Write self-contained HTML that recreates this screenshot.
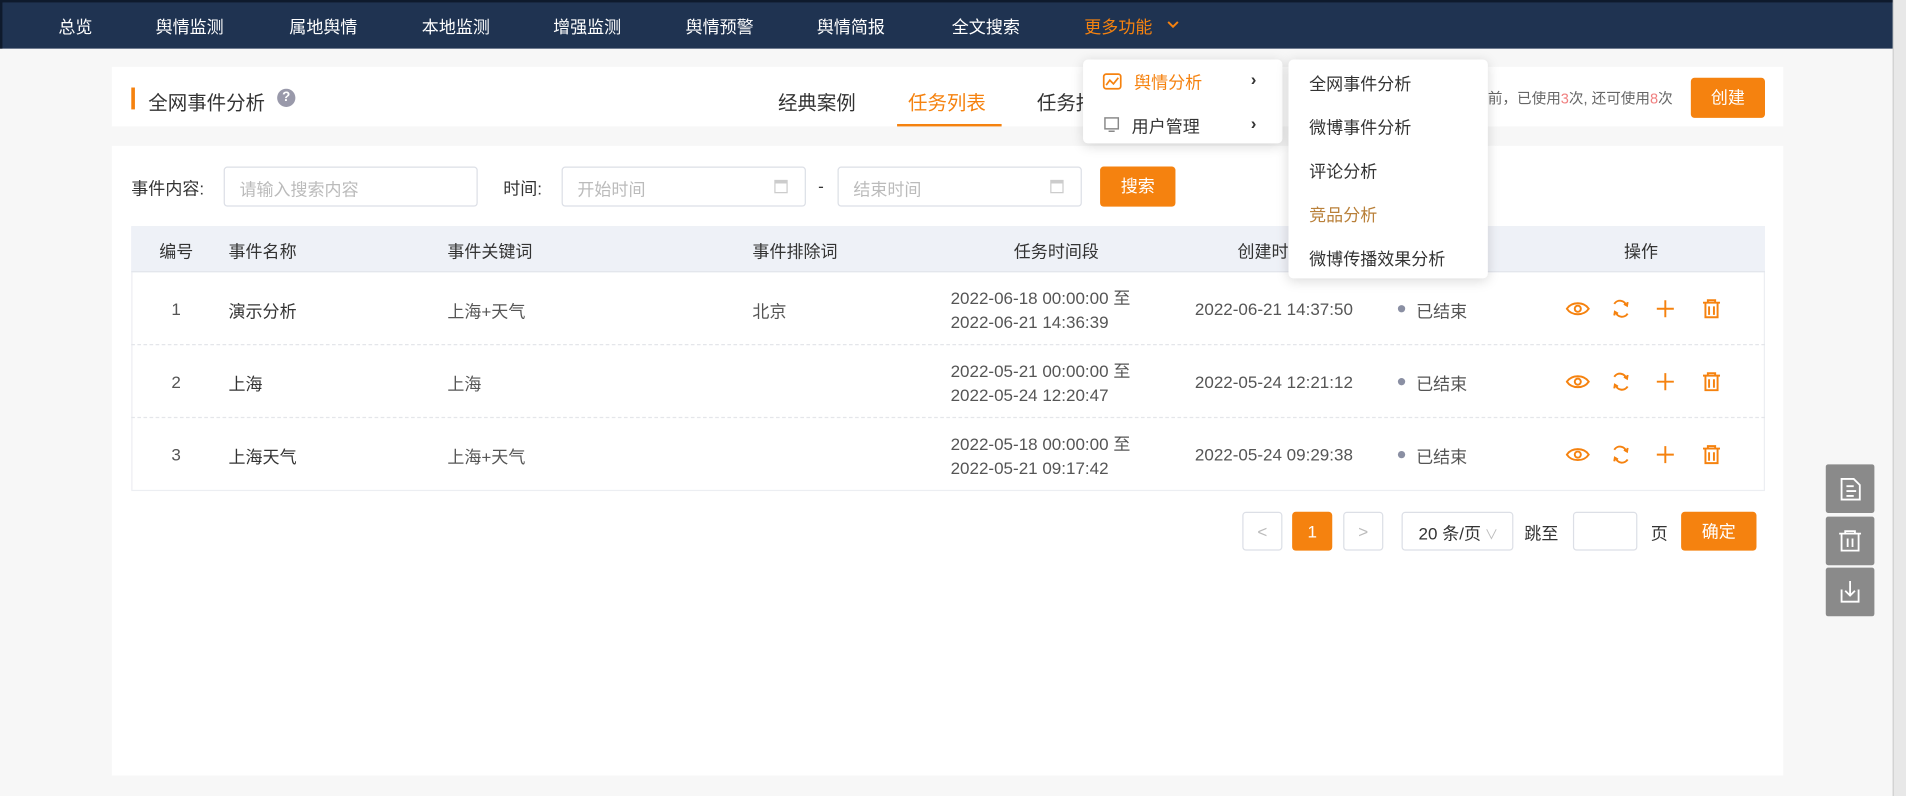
<!DOCTYPE html>
<html><head><meta charset="utf-8">
<style>
*{margin:0;padding:0;box-sizing:border-box}
html,body{width:1906px;height:796px;overflow:hidden;background:#f7f7f7}
#w{position:absolute;left:0;top:0;width:1568px;height:655px;transform:scale(1.21556);transform-origin:0 0;font-family:"Liberation Sans","Noto Sans CJK SC",sans-serif;font-size:14px;color:#333;background:#f7f7f7}
.a{position:absolute;white-space:nowrap}
.nav{position:absolute;left:0;top:0;width:1557px;height:40px;background:#1f3351;border-left:2px solid #0e1a2c;border-top:2px solid #0e1a2c}
.nav span{position:absolute;top:10px;color:#fff;font-size:14px}
.card{position:absolute;background:#fff}
.inp{position:absolute;height:33px;border:1px solid #dcdfe6;border-radius:3px;background:#fff;color:#bbb;padding:8px 12px;font-size:14px}
.btn{position:absolute;background:#f5820f;color:#fff;border-radius:3px;text-align:center;font-size:14px}
.th{position:absolute;top:197px;color:#333}
.row{position:absolute;left:108px;width:1344px;height:60px;border-bottom:1px dashed #e4e6ea}
.dd{position:absolute;background:#fff;border-radius:4px;box-shadow:0 2px 10px rgba(0,0,0,.15)}
.side{position:absolute;left:1502px;width:40px;height:40px;background:#8a8a8a;border-radius:2px}
</style></head><body><div id="w">
<div style="position:absolute;left:1557px;top:0;width:11px;height:655px;background:#e8e8e8;border-left:1px solid #cfcfcf"></div>
<div class="nav">
<span style="left:46px">总览</span><span style="left:126px">舆情监测</span><span style="left:236px">属地舆情</span><span style="left:345px">本地监测</span><span style="left:453px">增强监测</span><span style="left:562px">舆情预警</span><span style="left:670px">舆情简报</span><span style="left:781px">全文搜索</span><span style="left:890px;color:#f5820f">更多功能</span>
<svg style="position:absolute;left:957px;top:14px" width="12" height="10" viewBox="0 0 12 10"><path d="M2 2l4 4 4-4" stroke="#f5820f" stroke-width="1.6" fill="none"/></svg>
</div>
<div class="card" style="left:92px;top:55px;width:1375px;height:49px"></div>
<div class="a" style="left:108px;top:72px;width:3px;height:18px;background:#f5820f"></div>
<div class="a" style="left:122px;top:71px;font-size:16px">全网事件分析</div>
<div class="a" style="left:228px;top:73px;width:15px;height:15px;border-radius:50%;background:#99a;color:#fff;font-size:11px;text-align:center;line-height:15px;font-weight:bold">?</div>
<div class="a" style="left:640px;top:71px;font-size:16px">经典案例</div>
<div class="a" style="left:747px;top:71px;font-size:16px;color:#f5820f">任务列表</div>
<div class="a" style="left:738px;top:102px;width:86px;height:2px;background:#f5820f"></div>
<div class="a" style="left:853px;top:71px;font-size:16px">任务报告</div>
<div class="a" style="left:1188px;top:72px;font-size:12px;color:#666">截止目前，已使用<span style="color:#f08080">3</span>次, 还可使用<span style="color:#f08080">8</span>次</div>
<div class="btn" style="left:1391px;top:64px;width:61px;height:33px;line-height:33px">创建</div>
<div class="card" style="left:92px;top:120px;width:1375px;height:518px"></div>
<div class="a" style="left:108px;top:145px">事件内容:</div>
<div class="inp" style="left:184px;top:137px;width:209px">请输入搜索内容</div>
<div class="a" style="left:414px;top:145px">时间:</div>
<div class="inp" style="left:462px;top:137px;width:201px">开始时间<span style="position:absolute;right:14px;top:10px;width:11px;height:11px;border:1px solid #ccc;border-top-width:3px"></span></div>
<div class="a" style="left:673px;top:145px">-</div>
<div class="inp" style="left:689px;top:137px;width:201px">结束时间<span style="position:absolute;right:14px;top:10px;width:11px;height:11px;border:1px solid #ccc;border-top-width:3px"></span></div>
<div class="btn" style="left:905px;top:137px;width:62px;height:33px;line-height:33px">搜索</div>
<div class="a" style="left:108px;top:186px;width:1344px;height:218px;border:1px solid #eceef2"></div>
<div class="a" style="left:108px;top:186px;width:1344px;height:38px;background:#eef1f7;border-bottom:1px solid #e2e5ec"></div>
<div class="th" style="left:131px">编号</div><div class="th" style="left:188px">事件名称</div><div class="th" style="left:368px">事件关键词</div><div class="th" style="left:619px">事件排除词</div><div class="th" style="left:834px">任务时间段</div><div class="th" style="left:1018px">创建时间</div><div class="th" style="left:1336px">操作</div>
<div class="row" style="top:224px"></div><div class="row" style="top:284px"></div><div class="row" style="top:344px;border:none"></div>
<div class="a" style="left:141px;top:246px;color:#555">1</div><div class="a" style="left:188px;top:246px">演示分析</div><div class="a" style="left:368px;top:246px;color:#555">上海+天气</div><div class="a" style="left:619px;top:246px;color:#555">北京</div>
<div class="a" style="left:782px;top:235px;color:#555">2022-06-18 00:00:00 至</div><div class="a" style="left:782px;top:257px;color:#555">2022-06-21 14:36:39</div>
<div class="a" style="left:983px;top:246px;color:#555">2022-06-21 14:37:50</div>
<div class="a" style="left:141px;top:306px;color:#555">2</div><div class="a" style="left:188px;top:306px">上海</div><div class="a" style="left:368px;top:306px;color:#555">上海</div>
<div class="a" style="left:782px;top:295px;color:#555">2022-05-21 00:00:00 至</div><div class="a" style="left:782px;top:317px;color:#555">2022-05-24 12:20:47</div>
<div class="a" style="left:983px;top:306px;color:#555">2022-05-24 12:21:12</div>
<div class="a" style="left:141px;top:366px;color:#555">3</div><div class="a" style="left:188px;top:366px">上海天气</div><div class="a" style="left:368px;top:366px;color:#555">上海+天气</div>
<div class="a" style="left:782px;top:355px;color:#555">2022-05-18 00:00:00 至</div><div class="a" style="left:782px;top:377px;color:#555">2022-05-21 09:17:42</div>
<div class="a" style="left:983px;top:366px;color:#555">2022-05-24 09:29:38</div>
<div class="a" style="left:1150px;top:251px;width:6px;height:6px;border-radius:50%;background:#8a8fa3"></div><div class="a" style="left:1165px;top:246px;color:#555">已结束</div>
<div class="a" style="left:1150px;top:311px;width:6px;height:6px;border-radius:50%;background:#8a8fa3"></div><div class="a" style="left:1165px;top:306px;color:#555">已结束</div>
<div class="a" style="left:1150px;top:371px;width:6px;height:6px;border-radius:50%;background:#8a8fa3"></div><div class="a" style="left:1165px;top:366px;color:#555">已结束</div>
<svg class="a" style="left:1288px;top:244px" width="130" height="140" viewBox="0 0 130 140">
<defs><g id="ic" fill="none" stroke="#f5820f" stroke-width="1.6">
<path d="M1 10c4-6 14-6 18 0c-4 6-14 6-18 0z"/><circle cx="10" cy="10" r="2.5"/>
<path d="M40 6a5.5 5.5 0 0 1 10 1.5M51 14a5.5 5.5 0 0 1-10-1.5"/><path d="M48 6l2.5 1.5 .5-3M43 14l-2.5-1.5-.5 3"/>
<path d="M82 3v14M75 10h14"/>
<path d="M113 5h14M117 5v-2h6v2M115 5v12h10v-12M118 8v7M122 8v7"/>
</g></defs>
<use href="#ic" y="0"/><use href="#ic" y="60"/><use href="#ic" y="120"/>
</svg>
<div class="a" style="left:1022px;top:421px;width:33px;height:32px;border:1px solid #dcdfe6;border-radius:3px;color:#bbb;text-align:center;line-height:30px">&lt;</div>
<div class="btn" style="left:1063px;top:421px;width:33px;height:32px;line-height:32px">1</div>
<div class="a" style="left:1105px;top:421px;width:33px;height:32px;border:1px solid #dcdfe6;border-radius:3px;color:#bbb;text-align:center;line-height:30px">&gt;</div>
<div class="a" style="left:1153px;top:421px;width:92px;height:32px;border:1px solid #dcdfe6;border-radius:3px;padding:7px 13px;color:#333">20 条/页<span style="color:#bbb;font-size:11px"> ∨</span></div>
<div class="a" style="left:1254px;top:429px">跳至</div>
<div class="a" style="left:1294px;top:421px;width:53px;height:32px;border:1px solid #dcdfe6;border-radius:3px"></div>
<div class="a" style="left:1358px;top:429px">页</div>
<div class="btn" style="left:1383px;top:421px;width:62px;height:32px;line-height:32px">确定</div>
<div class="side" style="top:382px"><svg width="40" height="40" viewBox="0 0 40 40" fill="none" stroke="#fff" stroke-width="1.5"><path d="M13 12h10l5 5v12h-15z M17 18h6M17 22h8M17 26h6"/></svg></div>
<div class="side" style="top:425px"><svg width="40" height="40" viewBox="0 0 40 40" fill="none" stroke="#fff" stroke-width="1.5"><path d="M11 14h18M16 14v-2h8v2M13 14v14h14v-14M18 18v7M22 18v7"/></svg></div>
<div class="side" style="top:467px"><svg width="40" height="40" viewBox="0 0 40 40" fill="none" stroke="#fff" stroke-width="1.5"><path d="M13 18v10h14v-10M20 11v12M16 19l4 4 4-4"/></svg></div>
<div class="dd" style="left:891px;top:49px;width:164px;height:69px">
<svg class="a" style="left:16px;top:11px" width="16" height="14" viewBox="0 0 16 14" fill="none" stroke="#f5820f" stroke-width="1.4"><rect x="1" y="1" width="14" height="12" rx="2"/><path d="M3 10l3-4 3 3 4-5"/></svg>
<div class="a" style="left:42px;top:9px;color:#f5820f">舆情分析</div><div class="a" style="left:138px;top:8px;font-weight:bold">›</div>
<svg class="a" style="left:17px;top:47px" width="13" height="13" viewBox="0 0 13 13" fill="none" stroke="#888" stroke-width="1.2"><rect x="1" y="1" width="11" height="9"/><path d="M4 12h5"/></svg>
<div class="a" style="left:40px;top:45px">用户管理</div><div class="a" style="left:138px;top:44px;font-weight:bold">›</div>
</div>
<div class="dd" style="left:1060px;top:49px;width:164px;height:180px">
<div class="a" style="left:17px;top:10px">全网事件分析</div>
<div class="a" style="left:17px;top:46px">微博事件分析</div>
<div class="a" style="left:17px;top:82px">评论分析</div>
<div class="a" style="left:17px;top:118px;color:#b9803a">竞品分析</div>
<div class="a" style="left:17px;top:154px">微博传播效果分析</div>
</div>
</div></body></html>
